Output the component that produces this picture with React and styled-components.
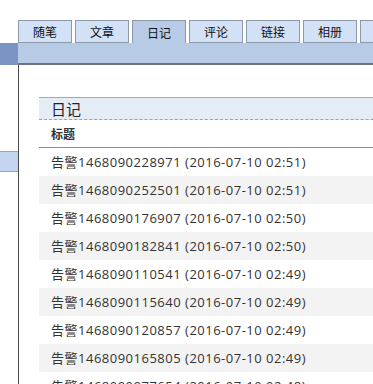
import React from "react";
import styled, { createGlobalStyle } from "styled-components";

const Global = createGlobalStyle`
  html, body { margin: 0; padding: 0; background: #fff; }
  body { font-family: "Open Sans", "Noto Sans CJK SC", sans-serif; overflow: hidden; }
`;

const Page = styled.div`
  width: 373px;
  height: 384px;
  overflow: hidden;
  display: flex;
  flex-direction: column;
`;

const TabBar = styled.div`
  flex-shrink: 0;
  display: flex;
  align-items: flex-end;
  gap: 3px;
  padding: 19px 0 0 18px;
  height: 24px;
  box-sizing: content-box;
  white-space: nowrap;
  overflow: hidden;
`;

const Tab = styled.div`
  flex: 0 0 auto;
  width: 54px;
  box-sizing: border-box;
  height: ${(p) => (p.$active ? "24px" : "23px")};
  margin-bottom: ${(p) => (p.$active ? "-1px" : "0")};
  background: ${(p) => (p.$active ? "#b8cbe6" : "#d3e1f6")};
  border: 1px solid #8d99a8;
  border-bottom: ${(p) => (p.$active ? "none" : "1px solid #8d99a8")};
  font-family: "Noto Sans CJK SC", sans-serif;
  font-size: 12px;
  color: #111;
  display: flex;
  align-items: center;
  justify-content: center;
  position: relative;
  z-index: ${(p) => (p.$active ? 1 : 0)};
`;

const Band = styled.div`
  flex-shrink: 0;
  display: flex;
  height: 22px;
`;

const BandLeft = styled.div`
  width: 18px;
  flex-shrink: 0;
  background: #7c94c2;
`;

const BandMain = styled.div`
  flex: 1;
  background: #b8cbe6;
  border-bottom: 2px solid #6f7380;
`;

const Body = styled.div`
  flex: 1;
  min-height: 0;
  display: flex;
`;

const Sidebar = styled.div`
  width: 18px;
  flex-shrink: 0;
  padding-top: 86px;
`;

const SideItem = styled.div`
  height: 19px;
  background: #c4d4ee;
  border-top: 1px solid #9aa5b5;
  border-bottom: 1px solid #9aa5b5;
`;

const Main = styled.div`
  flex: 1;
  min-width: 0;
  overflow: hidden;
  border-left: 1px solid #4a4a4a;
  padding: 32px 0 0 20px;
`;

const Panel = styled.div`
  width: 400px;
`;

const PanelHead = styled.div`
  height: 21px;
  border-top: 1px solid #a8a8a8;
  border-bottom: 1px dashed #a0a0a0;
  background: #e4edf6;
  padding-left: 12px;
  font-family: "Noto Sans CJK SC", sans-serif;
  font-size: 15px;
  line-height: 21px;
  color: #222;
`;

const ColHead = styled.div`
  height: 27px;
  border-bottom: 1px solid #8c8c8c;
  padding-left: 12px;
  font-family: "Noto Sans CJK SC", sans-serif;
  font-size: 12px;
  font-weight: bold;
  line-height: 27px;
  color: #333;
`;

const Row = styled.div`
  height: 28px;
  padding-left: 12px;
  background: ${(p) => (p.$alt ? "#f3f3f3" : "#fff")};
  font-family: "Open Sans", "Noto Sans CJK SC", sans-serif;
  font-size: 13px;
  letter-spacing: 0.5px;
  line-height: 28px;
  color: #333;
  white-space: nowrap;
`;

const tabs = ["随笔", "文章", "日记", "评论", "链接", "相册", "留言"];

const rows = [
  ["1468090228971", "2016-07-10 02:51"],
  ["1468090252501", "2016-07-10 02:51"],
  ["1468090176907", "2016-07-10 02:50"],
  ["1468090182841", "2016-07-10 02:50"],
  ["1468090110541", "2016-07-10 02:49"],
  ["1468090115640", "2016-07-10 02:49"],
  ["1468090120857", "2016-07-10 02:49"],
  ["1468090165805", "2016-07-10 02:49"],
  ["1468090077654", "2016-07-10 02:48"],
];

export default function App() {
  return (
    <>
      <Global />
      <Page>
        <TabBar>
          {tabs.map((t) => (
            <Tab key={t} $active={t === "日记"}>
              {t}
            </Tab>
          ))}
        </TabBar>
        <Band>
          <BandLeft />
          <BandMain />
        </Band>
        <Body>
          <Sidebar>
            <SideItem />
          </Sidebar>
          <Main>
            <Panel>
              <PanelHead>日记</PanelHead>
              <ColHead>标题</ColHead>
              {rows.map(([id, time], i) => (
                <Row key={id} $alt={i % 2 === 1}>
                  告警{id} ({time})
                </Row>
              ))}
            </Panel>
          </Main>
        </Body>
      </Page>
    </>
  );
}
